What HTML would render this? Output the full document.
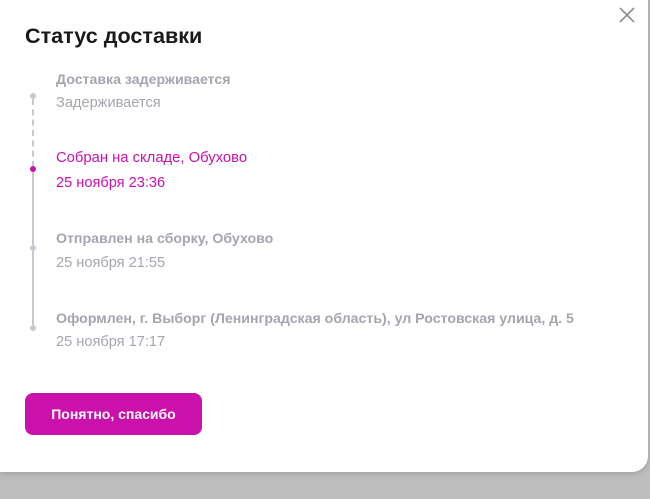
<!DOCTYPE html>
<html><head><meta charset="utf-8"><style>
html,body{margin:0;padding:0;}
body{width:650px;height:499px;background:#bdbdbd;position:relative;overflow:hidden;font-family:"Liberation Sans",sans-serif;}
.modal{position:absolute;left:0;top:-20px;width:648px;height:492px;background:#fff;border-radius:0 16px 16px 0;box-shadow:0 2px 6px rgba(0,0,0,.15);}
.abs{position:absolute;}
h1{position:absolute;left:25px;top:23px;margin:0;font-size:21.6px;font-weight:bold;color:#1a1a1a;}
.t{position:absolute;left:56px;font-size:14.15px;font-weight:bold;color:#a5a5ae;white-space:nowrap;}
.s{position:absolute;left:56px;font-size:14.6px;color:#a5a5ae;white-space:nowrap;}
.pink{color:#cb11ab;}
.dot{position:absolute;left:30px;width:6px;height:6px;border-radius:50%;background:#c8c8d0;}
.btn{position:absolute;left:25px;top:393px;width:177px;height:42px;border-radius:8px;background:#cb11ab;color:#fff;font-size:14px;font-weight:bold;text-align:center;line-height:42px;}
</style></head><body>
<div class="modal"></div>
<svg class="abs" style="left:618px;top:6px" width="18" height="18" viewBox="0 0 18 18"><path d="M2 2L16 16M16 2L2 16" stroke="#8e8e96" stroke-width="1.6"/></svg>
<h1>Статус доставки</h1>
<div class="abs" style="left:32px;top:99px;width:0;height:68px;border-left:2px dashed #c8c8d0;"></div>
<div class="abs" style="left:32px;top:172px;width:2px;height:156px;background:#c8c8d0;"></div>
<div class="dot" style="top:93px"></div>
<div class="dot" style="top:166px;background:#cb11ab"></div>
<div class="dot" style="top:245px"></div>
<div class="dot" style="top:325px"></div>
<div class="t" style="top:71px">Доставка задерживается</div>
<div class="s" style="top:95px">Задерживается</div>
<div class="t pink" style="top:150px;font-weight:normal;font-size:14.8px">Собран на складе, Обухово</div>
<div class="s pink" style="top:175px">25 ноября 23:36</div>
<div class="t" style="top:230px">Отправлен на сборку, Обухово</div>
<div class="s" style="top:255px">25 ноября 21:55</div>
<div class="t" style="top:310px">Оформлен, г. Выборг (Ленинградская область), ул Ростовская улица, д. 5</div>
<div class="s" style="top:334px">25 ноября 17:17</div>
<div class="btn">Понятно, спасибо</div>
</body></html>
